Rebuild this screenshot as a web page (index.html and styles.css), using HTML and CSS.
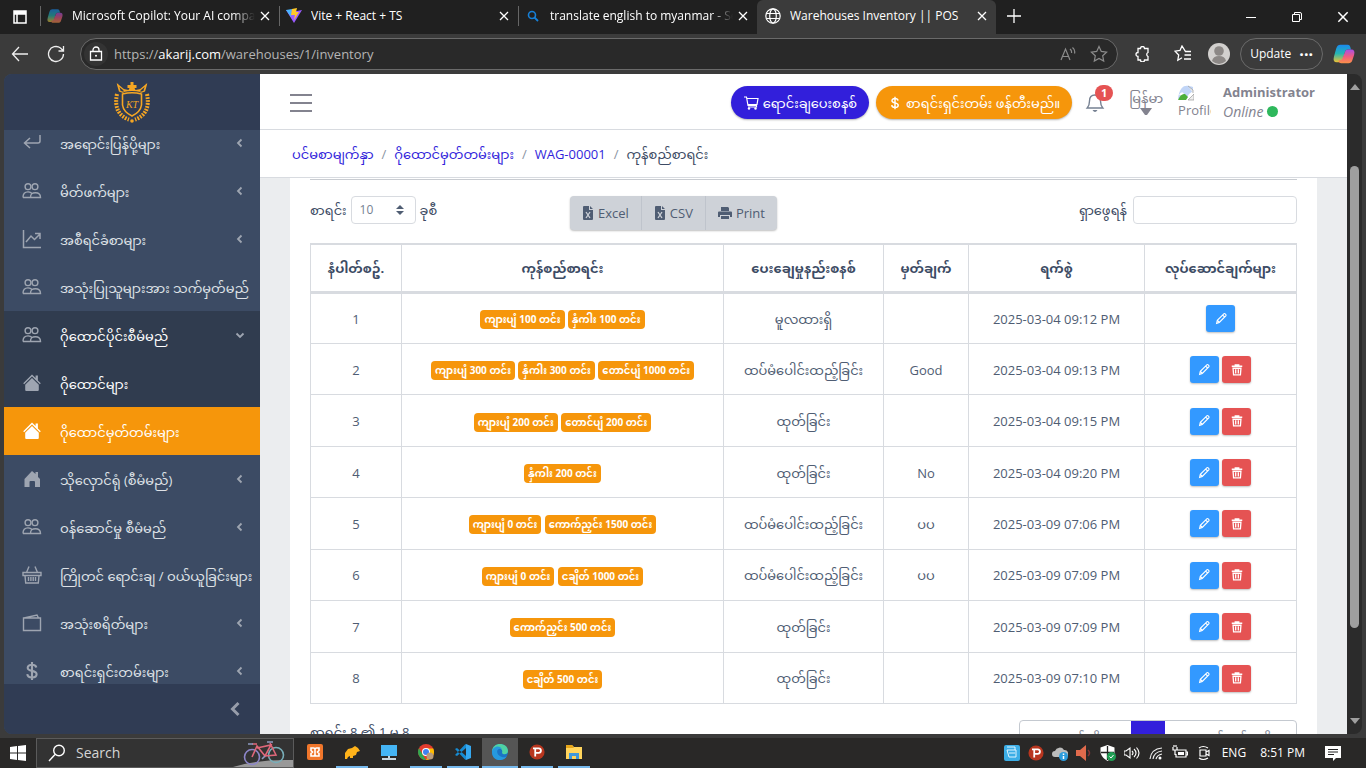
FILE: index.html
```html
<!DOCTYPE html>
<html lang="my">
<head>
<meta charset="utf-8">
<title>Warehouses Inventory || POS</title>
<link rel="stylesheet" href="styles.css">
</head>
<body>
<svg class="defs" aria-hidden="true">
  <symbol id="people" viewBox="0 0 20 20"><g fill="none" stroke="currentColor" stroke-width="1.4"><circle cx="6" cy="5.700" r="2.900"/><circle cx="13" cy="5.700" r="2.900"/><path d="M1 16.500c0-4 1.700-5.600 5-5.600 2.300 0 3.600.8 4 2.200M8.500 16.500H1M8.500 16.500c0-3.800 1.500-4.800 5-4.800s5 1.400 5 4.800z"/></g></symbol>
  <symbol id="left" viewBox="0 0 10 10"><path d="M6.500 1.500L3 5l3.500 3.500" fill="none" stroke="currentColor" stroke-width="1.800"/></symbol>
  <symbol id="house" viewBox="0 0 20 20"><path d="M10 1.500l3.600 3.600V2.500h2.300v4.900l2.900 2.900-1 1L10 3.600l-7.800 7.700-1-1z"/><path d="M10 5l6.800 6.700v5.100c0 .8-.5 1.200-1.200 1.200H4.400c-.7 0-1.200-.4-1.200-1.200v-5.100z"/></symbol>
  <symbol id="x" viewBox="0 0 12 12"><path d="M2 2l8 8M10 2l-8 8" fill="none" stroke="currentColor" stroke-width="1.300"/></symbol>
  <symbol id="dollar" viewBox="0 0 20 20"><path d="M14.300 6.500C14 4.600 12.300 3.700 10 3.700c-2.600 0-4.300 1.200-4.300 3 0 4.400 8.900 1.900 8.900 6.500 0 2-1.800 3.200-4.600 3.200-2.700 0-4.500-1.100-4.700-3.300M10 1v18" fill="none" stroke="currentColor" stroke-width="2.100"/></symbol>
  <symbol id="pen" viewBox="0 0 16 16"><path d="M3 13l.8-3.500 7.700-7.600c.8-.6 2.700 1.200 2.200 2.200L6 11.900zM10 3.500L12.400 6M4 9.700l2.200 2.200" fill="none" stroke="currentColor" stroke-width="1.300"/></symbol>
  <symbol id="bin" viewBox="0 0 16 16"><path d="M2 3.700h12M6 3.700V2.200h4v1.500M3.500 6l.6 7.500h7.800l.6-7.500zM6.500 7v5M9.500 7v5" fill="none" stroke="currentColor" stroke-width="1.500"/></symbol>
  <symbol id="sheet" viewBox="0 0 12 14"><path d="M1.500 0H7v4h4v9q0 1-1 1H2q-1 0-1-1V1zM8 0l3 3H8z" fill="currentColor"/><path d="M4 6l4 6M8 6l-4 6" stroke="#ced2d8" stroke-width="1.300"/></symbol>
  <symbol id="copilot" viewBox="0 0 24 24"><path d="M8 2h8c2 0 2.400 1 3 3l.6 2H16c-1.500 0-2.500 1-3 3l-2 7c-.7 3-2 4-4 4H4c-3 0-4-2-3-6L3.500 6C4.500 3 6 2 8 2z" fill="url(#cg1)"/><path d="M16 7h4c3 0 4 2 3 6l-2 6c-.7 2-2 3-4 3H9c-2 0-2.500-1-3-3 3 0 4-1 4.600-3L13 10c.5-2 1.500-3 3-3z" fill="url(#cg2)"/></symbol>
  <symbol id="pico" viewBox="0 0 18 18"><circle cx="9" cy="9" r="8.500" fill="#b8361f"/><path d="M7 14V5M4.500 5H11c3.500 0 3 5 0 5H7" fill="none" stroke="#fff" stroke-width="2"/></symbol>
  <linearGradient id="cg1" x2="0" y2="1"><stop stop-color="#1a8af0"/><stop offset=".5" stop-color="#25b6b2"/><stop offset="1" stop-color="#f0c132"/></linearGradient>
  <linearGradient id="cg2" x2="0" y2="1"><stop stop-color="#a650e8"/><stop offset=".5" stop-color="#ef5a83"/><stop offset="1" stop-color="#fb9148"/></linearGradient>
</svg>

<header class="tabs">
  <button class="tab-menu" aria-label="Tab actions"><svg class="i16" viewBox="0 0 16 16"><path d="M2 2h12v12H2zM2 5h12M5 5v9" fill="none" stroke="#fff" stroke-width="1.500"/><path d="M2 2h12v3H2z" fill="#fff"/></svg></button>
  <div class="tab first"><svg class="i16 dim"><use href="#copilot"/></svg><span class="tab-title fade">Microsoft Copilot: Your AI companion</span><button aria-label="Close tab"><svg class="i12"><use href="#x"/></svg></button></div>
  <div class="tab"><svg class="i16" viewBox="0 0 16 16"><path d="M0 2l8 13 8-13-5 1-6-1z" fill="#9a5cff"/><path d="M0 2l6-1-1 8z" fill="#49b5ff"/><path d="M6 1l5-1-1 4h3l-5 8 1-5H5z" fill="#ffc928"/></svg><span class="tab-title">Vite + React + TS</span><button aria-label="Close tab"><svg class="i12"><use href="#x"/></svg></button></div>
  <div class="tab"><svg class="i16" viewBox="0 0 16 16"><circle cx="7" cy="7" r="3.500" fill="none" stroke="#1680d8" stroke-width="1.600"/><path d="M9.500 9.500L13 13" stroke="#1680d8" stroke-width="1.800"/></svg><span class="tab-title fade">translate english to myanmar - Search</span><button aria-label="Close tab"><svg class="i12"><use href="#x"/></svg></button></div>
  <div class="tab active"><svg class="i16" viewBox="0 0 16 16"><g fill="none" stroke="#fff" stroke-width="1.200"><circle cx="8" cy="8" r="7.200"/><ellipse cx="8" cy="8" rx="3.300" ry="7.200"/><path d="M1.500 5.500h13M1.500 10.500h13"/></g></svg><span class="tab-title">Warehouses Inventory || POS</span><button aria-label="Close tab"><svg class="i12"><use href="#x"/></svg></button></div>
  <button class="new-tab" aria-label="New tab"><svg class="i16" viewBox="0 0 16 16"><path d="M8 1v14M1 8h14" stroke="#fff" stroke-width="1.300"/></svg></button>
  <div class="window-controls">
    <button aria-label="Minimize"><svg class="i12" viewBox="0 0 12 12"><path d="M1 6.500h10" stroke="#fff"/></svg></button>
    <button aria-label="Restore"><svg class="i12" viewBox="0 0 12 12"><path d="M1.500 3.500h7v7h-7zM3.500 3V1.500H9q1.500 0 1.500 1.500v5.500H9" fill="none" stroke="#fff"/></svg></button>
    <button aria-label="Close"><svg class="i14"><use href="#x"/></svg></button>
  </div>
</header>

<div class="toolbar">
  <button aria-label="Back"><svg class="i18" viewBox="0 0 18 18"><path d="M17 9H1.500M8 2L1.500 9 8 16" fill="none" stroke="#eee" stroke-width="1.300"/></svg></button>
  <button class="reload" aria-label="Reload"><svg class="i18" viewBox="0 0 18 18"><path d="M16.500 9a7.500 7.500 0 1 1-3-6l2.500 2.500M16.500 1v5h-5" fill="none" stroke="#eee" stroke-width="1.300"/></svg></button>
  <div class="address">
    <span class="lock"><svg class="i16" viewBox="0 0 16 16"><path d="M2.500 5.500h11V14h-11zM5 5.500V4a3 3 0 0 1 6 0v1.500" fill="none" stroke="#fff" stroke-width="1.300"/><circle cx="8" cy="9.800" r="1" fill="#fff"/></svg></span>
    <span class="url">https://<b>akarij.com</b>/warehouses/1/inventory</span>
    <svg class="i16 muted" viewBox="0 0 16 16"><path d="M1 14L5.500 3 10 14M2.500 10.500h6M10 3q2 1.500 1.500 4M12.500 1.500q3 2.500 2 6" fill="none" stroke="currentColor" stroke-width="1.200"/></svg>
    <svg class="i18 muted" viewBox="0 0 18 18"><path d="M9 1.500l2.300 4.900 5.300.7-3.900 3.700 1 5.300L9 13.500l-4.700 2.600 1-5.300L1.400 7.100l5.300-.7z" fill="none" stroke="currentColor" stroke-width="1.200"/></svg>
  </div>
  <button class="ext" aria-label="Extensions"><svg class="i16" viewBox="0 0 16 16"><path d="M4 2.500h2.500a2 2 0 0 1 4 0H14v4a2.200 2.200 0 0 0 0 4V14h-3.500a2 2 0 0 1-4 0H4v-3.500a2 2 0 0 1 0-4z" fill="none" stroke="#fff" stroke-width="1.300"/></svg></button>
  <button class="fav" aria-label="Favorites"><svg class="i18" viewBox="0 0 18 18"><path d="M17 6.500h-5.500L8 1 6 5.500l-5 .7L4.700 10l-.9 5.200L8 12.800M10.500 10H17M10 14h7" fill="none" stroke="#fff" stroke-width="1.300"/></svg></button>
  <button aria-label="Profile"><svg class="i22" viewBox="0 0 22 22"><circle cx="11" cy="11" r="11" fill="#d2d0ce"/><circle cx="11" cy="8" r="4.800" fill="#8c8886"/><path d="M4 18q1-5 7-5t7 5q-7 6-14 0z" fill="#8c8886"/></svg></button>
  <button class="update">Update <span>···</span></button>
  <button aria-label="Copilot"><svg class="i22"><use href="#copilot"/></svg></button>
</div>

<div class="viewport">
  <aside class="sidebar">
    <div class="brand"><svg class="crest" viewBox="0 0 36 42"><g fill="none" stroke="#f5a623"><path d="M8.500 13q9.500-2.500 19 0v11q-1 7-9.500 11-8.500-4-9.500-11z" stroke-width="1.600"/><path d="M3.500 3l2 7 4 1.500M32.500 3l-2 7-4 1.500M6 10l-2-6 6 5M30 10l2-6-6 5" stroke-width="1.300"/><path d="M3 13Q-1 33 15 38.500M33 13q4 20-12 25.500" stroke-width="4" stroke-dasharray="1.800 1.200"/></g><path d="M16.500 1h3v3h3v3h-2l1 2 5-1v3q-8.500-2-17 0V8l5 1 1-2h-2V4h3z" fill="#f5a623"/><circle cx="18" cy="40" r="1.800" fill="#f5a623"/><text x="18" y="27" text-anchor="middle" class="crest-text">KT</text></svg></div>
    <nav class="menu">
      <a href="#"><svg class="i20" viewBox="0 0 20 20"><path d="M18 2v6q0 2-2 2H3M8 5l-5.500 5L8 15" fill="none" stroke="currentColor" stroke-width="1.500"/></svg><span>အရောင်းပြန်ပို့များ</span><svg class="chev"><use href="#left"/></svg></a>
      <a href="#"><svg class="i20"><use href="#people"/></svg><span>မိတ်ဖက်များ</span><svg class="chev"><use href="#left"/></svg></a>
      <a href="#"><svg class="i20" viewBox="0 0 20 20"><path d="M1.500 1v17.500H19M4 13l5-6 3.500 3.500L18 5M13 4.500h5V10" fill="none" stroke="currentColor" stroke-width="1.500"/></svg><span>အစီရင်ခံစာများ</span><svg class="chev"><use href="#left"/></svg></a>
      <a href="#"><svg class="i20"><use href="#people"/></svg><span>အသုံးပြုသူများအား သက်မှတ်မည်</span></a>
      <a href="#" class="open"><svg class="i20"><use href="#people"/></svg><span>ဂိုထောင်ပိုင်းစီမံမည်</span><svg class="chev down"><use href="#left"/></svg></a>
      <a href="#" class="open"><svg class="i20 solid"><use href="#house"/></svg><span>ဂိုထောင်များ</span></a>
      <a href="#" class="current"><svg class="i20 solid"><use href="#house"/></svg><span>ဂိုထောင်မှတ်တမ်းများ</span></a>
      <a href="#"><svg class="i20 solid" viewBox="0 0 20 20"><path d="M10 2l3.500 3V3h2.500v5l2 2v8h-5v-5q0-1-1-1H8.500q-1 0-1 1v5H2.500v-8z"/></svg><span>သိုလှောင်ရုံ (စီမံမည်)</span><svg class="chev"><use href="#left"/></svg></a>
      <a href="#"><svg class="i20"><use href="#people"/></svg><span>ဝန်ဆောင်မှု စီမံမည်</span><svg class="chev"><use href="#left"/></svg></a>
      <a href="#"><svg class="i20" viewBox="0 0 20 20"><path d="M1 7.500h18v3H1zM3 10.500l.7 7.500h12.600l.7-7.500M7 1.500l-2.500 6M13 1.500l2.500 6M6.500 12v4M8.900 12v4M11.200 12v4M13.500 12v4" fill="none" stroke="currentColor" stroke-width="1.400"/></svg><span>ကြိုတင် ရောင်းချ / ဝယ်ယူခြင်းများ</span></a>
      <a href="#"><svg class="i20" viewBox="0 0 20 20"><path d="M1.500 5h17v12.500h-17zM2 5l13-3 1.500 3" fill="none" stroke="currentColor" stroke-width="1.400"/></svg><span>အသုံးစရိတ်များ</span><svg class="chev"><use href="#left"/></svg></a>
      <a href="#"><svg class="i20"><use href="#dollar"/></svg><span>စာရင်းရှင်းတမ်းများ</span><svg class="chev"><use href="#left"/></svg></a>
    </nav>
    <button class="collapse" aria-label="Collapse menu"><svg class="i18" viewBox="0 0 18 18"><path d="M12.500 3l-6 6 6 6" fill="none" stroke="currentColor" stroke-width="3"/></svg></button>
  </aside>

  <div class="page">
    <header class="topbar">
      <button class="burger" aria-label="Menu"><svg viewBox="0 0 22 20"><path d="M0 2h22M0 10h22M0 18h22" stroke="#83838f" stroke-width="2"/></svg></button>
      <button class="pill blue"><svg class="i16" viewBox="0 0 16 16"><path d="M1 2h2.500l1.500 8.500h8.500V12H5M4 3.500h11l-1 6H5" fill="none" stroke="#fff" stroke-width="1.200"/><circle cx="6" cy="13.500" r="1.200" fill="#fff"/><circle cx="12.500" cy="13.500" r="1.200" fill="#fff"/></svg>ရောင်းချပေးစနစ်</button>
      <button class="pill orange"><svg class="i14"><use href="#dollar"/></svg>စာရင်းရှင်းတမ်း ဖန်တီးမည်။</button>
      <button class="bell" aria-label="Notifications"><svg class="i20" viewBox="0 0 20 20"><path d="M10 2c-4 0-5.500 3-5.500 6 0 4-.8 5.300-2.300 7h15.600c-1.500-1.700-2.300-3-2.300-7 0-3-1.500-6-5.500-6z" fill="none" stroke="#768192" stroke-width="1.400"/><path d="M7.500 17h5q-2.500 4-5 0z" fill="#768192"/></svg><span class="count">1</span></button>
      <button class="lang"><span>မြန်မာ</span><svg viewBox="0 0 12 8"><path d="M0 0h12L7 7H5z" fill="#83838f"/></svg></button>
      <div class="profile"><svg viewBox="0 0 16 16" class="i16"><path d="M0 14C2-2 9 0 15 2v4l-4 3-3 5z" fill="#c1d5f7"/><path d="M1 10q3-5 5-1l-2 2z" fill="#fff"/><path d="M0 15q3-7 7-6l3 3-2 3z" fill="#4caf3a"/><path d="M10 1l5 4v3M10 15h6V9z" fill="#eee" stroke="#999" stroke-width=".7"/></svg><span>Profile</span></div>
      <div class="account"><strong>Administrator</strong><span><em>Online</em><i></i></span></div>
    </header>
    <nav class="crumbs">
      <a href="#">ပင်မစာမျက်နှာ</a><span class="sep">/</span><a href="#">ဂိုထောင်မှတ်တမ်းများ</a><span class="sep">/</span><a href="#">WAG-00001</a><span class="sep">/</span><span>ကုန်စည်စာရင်း</span>
    </nav>
    <main class="content">
      <section class="card">
        <div class="controls">
          <div class="length"><label for="rows">စာရင်း</label><span class="select"><select id="rows"><option>10</option><option>25</option><option>50</option></select><svg viewBox="0 0 8 10"><path d="M0 4l4-4 4 4zM0 6h8l-4 4z" fill="#4f5d73"/></svg></span><span>ခုစီ</span></div>
          <div class="exports">
            <button><svg class="sheet"><use href="#sheet"/></svg>Excel</button><button><svg class="sheet"><use href="#sheet"/></svg>CSV</button><button><svg class="i14" viewBox="0 0 14 14"><path d="M3 5V1h7l1 1v3zM0 6.500Q0 5.500 1 5.500h12q1 0 1 1V11h-2V9H2v2H0z" fill="currentColor"/><path d="M3 10h8v3H3z" fill="currentColor"/></svg>Print</button>
          </div>
          <label class="search">ရှာဖွေရန် <input type="search"></label>
        </div>
        <table class="stock">
          <colgroup><col class="c-no"><col class="c-items"><col class="c-type"><col class="c-note"><col class="c-date"><col class="c-act"></colgroup>
          <thead><tr><th>နံပါတ်စဥ်.</th><th>ကုန်စည်စာရင်း</th><th>ပေးချေမှုနည်းစနစ်</th><th>မှတ်ချက်</th><th>ရက်စွဲ</th><th>လုပ်ဆောင်ချက်များ</th></tr></thead>
          <tbody>
            <tr><td>1</td><td><span class="badge">ကျားပျံ 100 တင်း</span> <span class="badge">နှံကါး 100 တင်း</span></td><td>မူလထားရှိ</td><td></td><td>2025-03-04 09:12 PM</td><td><button class="act edit" aria-label="Edit"><svg class="i14"><use href="#pen"/></svg></button></td></tr>
            <tr><td>2</td><td><span class="badge">ကျားပျံ 300 တင်း</span> <span class="badge">နှံကါး 300 တင်း</span> <span class="badge">တောင်ပျံ 1000 တင်း</span></td><td>ထပ်မံပေါင်းထည့်ခြင်း</td><td>Good</td><td>2025-03-04 09:13 PM</td><td><button class="act edit" aria-label="Edit"><svg class="i14"><use href="#pen"/></svg></button> <button class="act del" aria-label="Delete"><svg class="i14"><use href="#bin"/></svg></button></td></tr>
            <tr><td>3</td><td><span class="badge">ကျားပျံ 200 တင်း</span> <span class="badge">တောင်ပျံ 200 တင်း</span></td><td>ထုတ်ခြင်း</td><td></td><td>2025-03-04 09:15 PM</td><td><button class="act edit" aria-label="Edit"><svg class="i14"><use href="#pen"/></svg></button> <button class="act del" aria-label="Delete"><svg class="i14"><use href="#bin"/></svg></button></td></tr>
            <tr><td>4</td><td><span class="badge">နှံကါး 200 တင်း</span></td><td>ထုတ်ခြင်း</td><td>No</td><td>2025-03-04 09:20 PM</td><td><button class="act edit" aria-label="Edit"><svg class="i14"><use href="#pen"/></svg></button> <button class="act del" aria-label="Delete"><svg class="i14"><use href="#bin"/></svg></button></td></tr>
            <tr><td>5</td><td><span class="badge">ကျားပျံ 0 တင်း</span> <span class="badge">ကောက်ညှင်း 1500 တင်း</span></td><td>ထပ်မံပေါင်းထည့်ခြင်း</td><td>ပပ</td><td>2025-03-09 07:06 PM</td><td><button class="act edit" aria-label="Edit"><svg class="i14"><use href="#pen"/></svg></button> <button class="act del" aria-label="Delete"><svg class="i14"><use href="#bin"/></svg></button></td></tr>
            <tr><td>6</td><td><span class="badge">ကျားပျံ 0 တင်း</span> <span class="badge">ငချိတ် 1000 တင်း</span></td><td>ထပ်မံပေါင်းထည့်ခြင်း</td><td>ပပ</td><td>2025-03-09 07:09 PM</td><td><button class="act edit" aria-label="Edit"><svg class="i14"><use href="#pen"/></svg></button> <button class="act del" aria-label="Delete"><svg class="i14"><use href="#bin"/></svg></button></td></tr>
            <tr><td>7</td><td><span class="badge">ကောက်ညှင်း 500 တင်း</span></td><td>ထုတ်ခြင်း</td><td></td><td>2025-03-09 07:09 PM</td><td><button class="act edit" aria-label="Edit"><svg class="i14"><use href="#pen"/></svg></button> <button class="act del" aria-label="Delete"><svg class="i14"><use href="#bin"/></svg></button></td></tr>
            <tr><td>8</td><td><span class="badge">ငချိတ် 500 တင်း</span></td><td>ထုတ်ခြင်း</td><td></td><td>2025-03-09 07:10 PM</td><td><button class="act edit" aria-label="Edit"><svg class="i14"><use href="#pen"/></svg></button> <button class="act del" aria-label="Delete"><svg class="i14"><use href="#bin"/></svg></button></td></tr>
          </tbody>
        </table>
        <div class="table-foot"><span class="summary">စာရင်း 8 ၏ 1 မှ 8</span><nav class="pager"><a href="#" class="prev">နောက်သို့</a><a href="#" class="on">1</a><a href="#" class="next">နောက်တစ်ခုသို့</a></nav></div>
      </section>
    </main>
  </div>
  <div class="scrollbar"><svg viewBox="0 0 10 6"><path d="M5 0l5 6H0z" fill="#9f9f9f"/></svg><i></i><svg viewBox="0 0 10 6"><path d="M0 0h10L5 6z" fill="#9f9f9f"/></svg></div>
</div>

<footer class="taskbar">
  <button class="start" aria-label="Start"><svg class="i16" viewBox="0 0 16 16"><path d="M0 2l7-1v6.500H0zM8 1l8-1v7.500H8zM0 8.500h7V15l-7-1zM8 8.500h8V16l-8-1z" fill="#fff"/></svg></button>
  <label class="find"><svg class="i18" viewBox="0 0 18 18"><circle cx="11" cy="6.500" r="5.300" fill="none" stroke="#fff" stroke-width="1.400"/><path d="M7 10.500L1 17" stroke="#fff" stroke-width="1.400"/></svg><input type="text" placeholder="Search"><svg class="bike" viewBox="0 0 60 28"><path d="M0 28q26-8 60-7v7z" fill="#999"/><g fill="none" stroke-width="1.600"><circle cx="19" cy="18" r="7.500" stroke="#8d86c9"/><circle cx="43" cy="16" r="7.500" stroke="#78aeb9"/><path d="M19 18l5-11 8 10 6-11-14 3M37 4l6 12-11 1M19 5h5" stroke="#e0677a"/><path d="M34 3h6M15 5h5M32 17l-3 3" stroke="#8d9bc0"/></g></svg></label>
  <div class="apps">
    <button aria-label="XAMPP"><svg class="i16" viewBox="0 0 16 16"><rect width="16" height="16" rx="2" fill="#f0762b"/><path d="M4 4h2.500Q8 4 8 5.500v5Q8 12 9.500 12H12v-2.500L10.500 8 12 6.500V4H9.500Q8 4 8 5.500v5Q8 12 6.500 12H4V9.500L5.500 8 4 6.500z" fill="none" stroke="#fff" stroke-width="1.600"/></svg></button>
    <button class="run" aria-label="Database"><svg class="i16" viewBox="0 0 16 16"><path d="M1 9l3-4 4-1 3-2 3 2 2 3-3 1-1 3-3 1v2H6v-2l-2 1-1 2H1z" fill="#ffb31a"/></svg></button>
    <button aria-label="This PC"><svg class="i18" viewBox="0 0 18 18"><path d="M1 2h16v11H1z" fill="#45b5f5"/><path d="M8 13h2v2H8zM2 15h14v2H2z" fill="#c8d6df"/></svg></button>
    <button class="run" aria-label="Chrome"><svg class="i16" viewBox="0 0 16 16"><circle cx="8" cy="8" r="8" fill="#e33b2e"/><path d="M1 4.200l4 7 3 4.800A8 8 0 0 1 1 4.200z" fill="#2da94f"/><path d="M8 4.500h7.200A8 8 0 0 1 8 16l3.500-6z" fill="#fdbd00"/><circle cx="8" cy="8" r="4" fill="#fff"/><circle cx="8" cy="8" r="3" fill="#3e82f1"/><circle cx="12" cy="12" r="3.500" fill="#b89b7b"/></svg></button>
    <button class="run" aria-label="VS Code"><svg class="i16" viewBox="0 0 16 16"><path d="M0 5l2-1 9 8v4l-1-.5zM0 11l2 1 9-8V0l-1 .5z" fill="#168bd2"/><path d="M11 0l5 2v12l-5 2z" fill="#35a8f0"/></svg></button>
    <button class="run focus" aria-label="Edge"><svg class="i16" viewBox="0 0 16 16"><circle cx="8" cy="8" r="8" fill="#1b74c6"/><path d="M0 8C0-3 16-2 16 7c0 4-5 4-6 2 1-3-1-5-4-5S1 6 0 8z" fill="#4fd2a4"/><path d="M0 8c0-5 7-8 10-3-6-2-7 6 0 8 2 .6 4 0 5-1-3 6-15 6-15-4z" fill="#2699df"/></svg></button>
    <button class="run" aria-label="PicPick"><svg class="i16"><use href="#pico"/></svg></button>
    <button class="run" aria-label="Files"><svg class="i16" viewBox="0 0 16 16"><path d="M0 1h6l2 2h8v12H0z" fill="#ffd45c"/><path d="M0 1h6l2 3H0z" fill="#e5a51a"/><path d="M3 15V9h10v6h-3v-3H6v3z" fill="#3f97db"/></svg></button>
  </div>
  <div class="tray">
    <svg class="i16" viewBox="0 0 16 16"><rect width="16" height="16" rx="2" fill="#3caee6"/><path d="M3 5h9v7H5zM3 2h8v3M5 8h6" fill="none" stroke="#dff4ff" stroke-width="1"/></svg>
    <svg class="i16"><use href="#pico"/></svg>
    <svg class="i16" viewBox="0 0 16 16"><path d="M3 12a3 3 0 0 1 0-6 5 5 0 0 1 9-1 4 4 0 0 1 3 7z" fill="#bbb"/><circle cx="11.500" cy="11.500" r="4.500" fill="#2d9cdc"/><path d="M11.500 11v3M11.500 8.500v1.500" stroke="#fff" stroke-width="1.500"/></svg>
    <svg class="i16" viewBox="0 0 16 16"><path d="M0 5h4l6-5v16l-6-5H0z" fill="#e06a4c"/><path d="M12 5q3 3 0 6" fill="none" stroke="#833" stroke-width="1.500"/></svg>
    <svg class="i16" viewBox="0 0 16 16"><path d="M7.500 0l7 2.500v4c0 4-3 7-7 9.500-4-2.500-7-5.500-7-9.500v-4z" fill="#fff"/><path d="M7.500 1v14M1 7.500h13" stroke="#222" stroke-width="1.300"/><circle cx="11.500" cy="11.500" r="4.500" fill="#1f9e54"/><path d="M9.500 11.500l1.500 1.500 2.500-3" fill="none" stroke="#fff"/></svg>
    <svg class="i16" viewBox="0 0 16 16"><path d="M0 6h2l4-3v10l-4-3H0zM8 6q2 2 0 4M10 4q4 4 0 8M12.500 2.500q5 5.500 0 11" fill="none" stroke="#fff" stroke-width="1.100"/></svg>
    <svg class="i16" viewBox="0 0 16 16"><path d="M2 14Q3 4 14 3M5 14q1-7 9-8M8 14q1-4 6-5" fill="none" stroke="#eee" stroke-width="1.200"/><circle cx="12" cy="13" r="1.500" fill="#fff"/></svg>
    <svg class="i16" viewBox="0 0 16 16"><path d="M5 5h9v7H4V9M14 7h1.500v3H14M1 2v3h4V2M2 0v2M4 0v2M3 5v5" fill="none" stroke="#fff" stroke-width="1.200"/><path d="M6 7h6v3H6z" fill="#fff"/></svg>
    <svg class="i16" viewBox="0 0 16 16"><path d="M4 5h6v6H4zM10 7l3-1.500v5L10 9M3 3q4-3 9 0M3 13q4 3 9 0" fill="none" stroke="#fff" stroke-width="1.200"/></svg>
    <span class="ime">ENG</span><time>8:51 PM</time>
    <svg class="i16" viewBox="0 0 16 16"><path d="M0 1h16v12h-5l-3 3v-3H0z" fill="#fff"/><path d="M3 4.500h10M3 7h10M3 9.500h6" stroke="#222"/></svg>
  </div>
</footer>
</body>
</html>
```
FILE: styles.css
```css
* { box-sizing: border-box; }

body {
  margin: 0;
  height: 100vh;
  display: flex;
  flex-direction: column;
  overflow: hidden;
  background: #3b3b3b;
  color: #3c4b64;
  font: 13px/20px "Open Sans", "Noto Sans", "Noto Sans Myanmar", "Myanmar Text", Padauk, sans-serif;
}

button, input, select { font: inherit; color: inherit; }
button { display: flex; align-items: center; justify-content: center; padding: 0; border: 0; background: none; }
a { color: inherit; text-decoration: none; }
svg { display: block; flex: none; }
.defs { position: absolute; width: 0; height: 0; }
.i12 { width: 12px; height: 12px; }
.i14 { width: 14px; height: 14px; }
.i16 { width: 16px; height: 16px; }
.i18 { width: 18px; height: 18px; }
.i20 { width: 20px; height: 20px; }
.i22 { width: 22px; height: 22px; }
.solid { fill: currentColor; }
.muted { color: #8c8c8c; }
.dim { opacity: .6; }

/* browser tabs */
.tabs { display: flex; flex: none; height: 34px; background: #202020; color: #fff; font-size: 12px; }
.tab-menu { width: 40px; }
.tab { display: flex; align-items: center; gap: 9px; flex: 0 1 239px; min-width: 0; padding: 0 8px 2px 7px; }
.tab + .tab::before, .tab.first::before { content: ""; width: 1px; height: 20px; margin-right: -3px; margin-left: -7px; background: #666; }
.tab.active { padding-left: 8px; background: #3b3b3b; border-radius: 6px 6px 0 0; }
.tab.active::before { display: none; }
.tab-title { flex: 1; min-width: 0; overflow: hidden; white-space: nowrap; }
.fade { margin-right: -5px; mask-image: linear-gradient(90deg, #000 88%, transparent); }
.new-tab { width: 36px; padding-bottom: 2px; }
.window-controls { display: flex; margin-left: auto; }
.window-controls button { width: 46px; }

/* browser toolbar */
.toolbar { display: flex; align-items: center; flex: none; gap: 16px; height: 40px; padding: 0 11px; color: #fff; }
.reload { margin-left: 2px; }
.address { display: flex; align-items: center; gap: 14px; flex: 1; height: 32px; margin-left: -1px; padding: 0 9px 0 3px; background: #292929; border: 1px solid #6a6a6a; border-radius: 16px; }
.lock { display: grid; place-items: center; width: 24px; height: 24px; margin-right: -8px; border-radius: 50%; background: #333; }
.url { flex: 1; color: #b5b5b5; }
.url b { color: #fff; font-weight: 400; }
.ext { padding-right: 8px; }
.update { gap: 8px; height: 32px; margin: 0 -6px; padding: 0 9px; border: 1px solid #6a6a6a; border-radius: 16px; font-size: 12px; }
.update span { font-size: 16px; font-weight: 700; }

/* page area */
.viewport { display: flex; flex: 1; min-height: 0; margin: 0 4px 4px; border-radius: 8px; overflow: hidden; }
.scrollbar { display: flex; flex-direction: column; align-items: center; flex: none; width: 15px; padding: 10px 0; background: #2b2b2b; }
.scrollbar svg { width: 10px; height: 6px; }
.scrollbar i { width: 9px; height: 462px; margin: 76px 0 auto; border-radius: 5px; background: #9f9f9f; }

/* sidebar */
.sidebar { display: flex; flex-direction: column; flex: none; width: 256px; background: #3c4b64; color: #dfe2e7; }
.brand { display: grid; place-items: center; flex: none; height: 56px; background: #303c54; }
.crest { width: 36px; height: 42px; }
.crest-text { font: italic 10px "Liberation Serif", serif; fill: #f5a623; }
.menu { flex: 1; min-height: 0; overflow: hidden; }
.menu a { display: flex; align-items: center; height: 48px; padding: 0 15px 0 18px; }
.menu a:first-child { margin-top: -11px; }
.menu a > svg { color: #9ea5b1; }
.menu span { flex: 1; padding-top: 2px; margin-left: 18px; white-space: nowrap; }
.menu .chev { width: 10px; height: 10px; }
.menu .down { transform: rotate(-90deg); }
.menu .open { background: #303c4f; color: #fff; }
.menu .current, .menu .current > svg { background: #f6960b; color: #fff; }
.collapse { justify-content: flex-end; flex: none; height: 50px; padding-right: 16px; background: #303c54; color: #979daa; }

/* header */
.page { display: flex; flex-direction: column; flex: 1; min-width: 0; background: #ebedef; }
.topbar { display: flex; align-items: center; flex: none; height: 56px; padding: 0 32px 0 30px; background: #fff; border-bottom: 1px solid #d8dbe0; color: #83838f; }
.burger { margin: 2px auto 0 0; }
.burger svg { width: 22px; height: 20px; }
.pill { gap: 4px; height: 33px; margin: 2px 7px 0 0; padding: 0 12px; border-radius: 17px; box-shadow: 0 1px 2px rgba(0, 0, 0, .3); color: #fff; white-space: nowrap; }
.blue { background: #321fdb; }
.orange { background: #f6960b; }
.bell { position: relative; margin: 2px 24px 0 6px; }
.count { position: absolute; left: 10px; top: -8px; width: 18px; height: 16px; border-radius: 8px; background: #e55353; color: #fff; font-size: 11px; font-weight: 700; line-height: 16px; }
.lang { flex-direction: column; margin-right: 15px; }
.lang svg { width: 12px; height: 8px; }
.profile { width: 33px; height: 34px; margin-right: 12px; overflow: hidden; line-height: 18px; }
.account { display: flex; flex-direction: column; }
.account span { display: flex; align-items: center; gap: 4px; font-size: 14px; }
.account i { width: 11px; height: 11px; border-radius: 50%; background: #2eb85c; }

.crumbs { display: flex; align-items: center; flex: none; gap: 8px; height: 48px; padding: 0 32px; background: #fff; border-bottom: 1px solid #d8dbe0; white-space: nowrap; }
.crumbs a { color: #321fdb; }
.sep { color: #8a93a2; }

/* inventory card */
.content { flex: 1; min-height: 0; overflow: hidden; padding: 1px 30px 0; background: linear-gradient(#fff, #fff) 30px 0 / calc(100% - 60px) 100% no-repeat; }
.card { min-height: 100%; padding: 0 20px; background: #fff; }
.controls { display: grid; grid-template-columns: 1fr auto 2fr; align-items: start; height: 64px; padding-top: 16px; border-top: 1px solid #c9ccd1; }
.length, .search { display: flex; align-items: center; gap: 4px; white-space: nowrap; }
.search { justify-content: flex-end; gap: 6px; }
.select { position: relative; }
.select svg { position: absolute; right: 12px; top: 9px; width: 8px; height: 10px; pointer-events: none; }
.length select, .search input { display: block; height: 28px; border: 1px solid #d8dbe0; border-radius: 4px; background: #fff; }
.length select { width: 65px; padding: 0 8px; appearance: none; color: #768192; font-size: 12px; }
.search input { width: 164px; }
.exports { display: flex; height: 34px; border-radius: 4px; background: #ced2d8; color: #4f5d73; box-shadow: 0 1px 2px rgba(0, 0, 0, .25); }
.exports button { gap: 4px; padding: 0 12px; }
.exports button + button { border-left: 1px solid #bfc4cc; }
.sheet { width: 12px; height: 14px; }

.stock { width: 100%; height: 461px; table-layout: fixed; border-collapse: collapse; text-align: center; }
.c-no { width: 91px; }
.c-type { width: 160px; }
.c-note { width: 85px; }
.c-date { width: 176px; }
.c-act { width: 152px; }
.stock th, .stock td { padding: 1px 4px 0; border: 1px solid #d8dbe0; }
.stock th { height: 48px; border-top-width: 2px; border-bottom-width: 3px; font-weight: 700; }
.stock td { height: 51px; color: #4f5d73; }
.badge { display: inline-block; padding: 0 4px; border-radius: 4px; background: #f6960b; color: #fff; font-size: 10px; font-weight: 700; line-height: 19px; white-space: nowrap; }
.act { display: inline-flex; width: 29px; height: 27px; border-radius: 3px; box-shadow: 0 1px 2px rgba(0, 0, 0, .25); color: #fff; vertical-align: middle; }
.edit { background: #39f; }
.del { background: #e55353; }

.table-foot { display: flex; justify-content: space-between; padding: 16px 0; }
.summary { padding-top: 2px; }
.pager { display: flex; color: #8a93a2; line-height: 34px; text-align: center; border: 1px solid #c4c9d0; border-radius: 4px; white-space: nowrap; }
.prev { width: 111px; }
.on { width: 34px; background: #321fdb; color: #fff; }
.next { width: 131px; }

/* system taskbar */
.taskbar { display: flex; flex: none; height: 30px; background: #292827; color: #fff; }
.start { width: 36px; }
.find { display: flex; align-items: center; gap: 10px; width: 258px; padding-left: 11px; border: 1px solid #5b5b5b; background: #333; }
.find input { flex: 1; min-width: 0; padding: 0; border: 0; background: none; font-size: 14px; }
.find input::placeholder { color: #d5d5d5; opacity: 1; }
.bike { width: 60px; height: 28px; }
.apps { display: flex; gap: 1px; margin-left: 3px; }
.apps button { width: 36px; border-bottom: 2px solid transparent; }
.apps .run { border-image: linear-gradient(90deg, transparent 4px, #76b9ed 4px 32px, transparent 32px) 2; }
.apps .focus { border-image: none; border-bottom-color: #76b9ed; background: #555; }
.tray { display: flex; align-items: center; gap: 8px; margin-left: auto; padding-right: 25px; font-size: 12px; }
.ime { margin: 0 6px 0 2px; }
.tray time { margin-right: 12px; }
```
